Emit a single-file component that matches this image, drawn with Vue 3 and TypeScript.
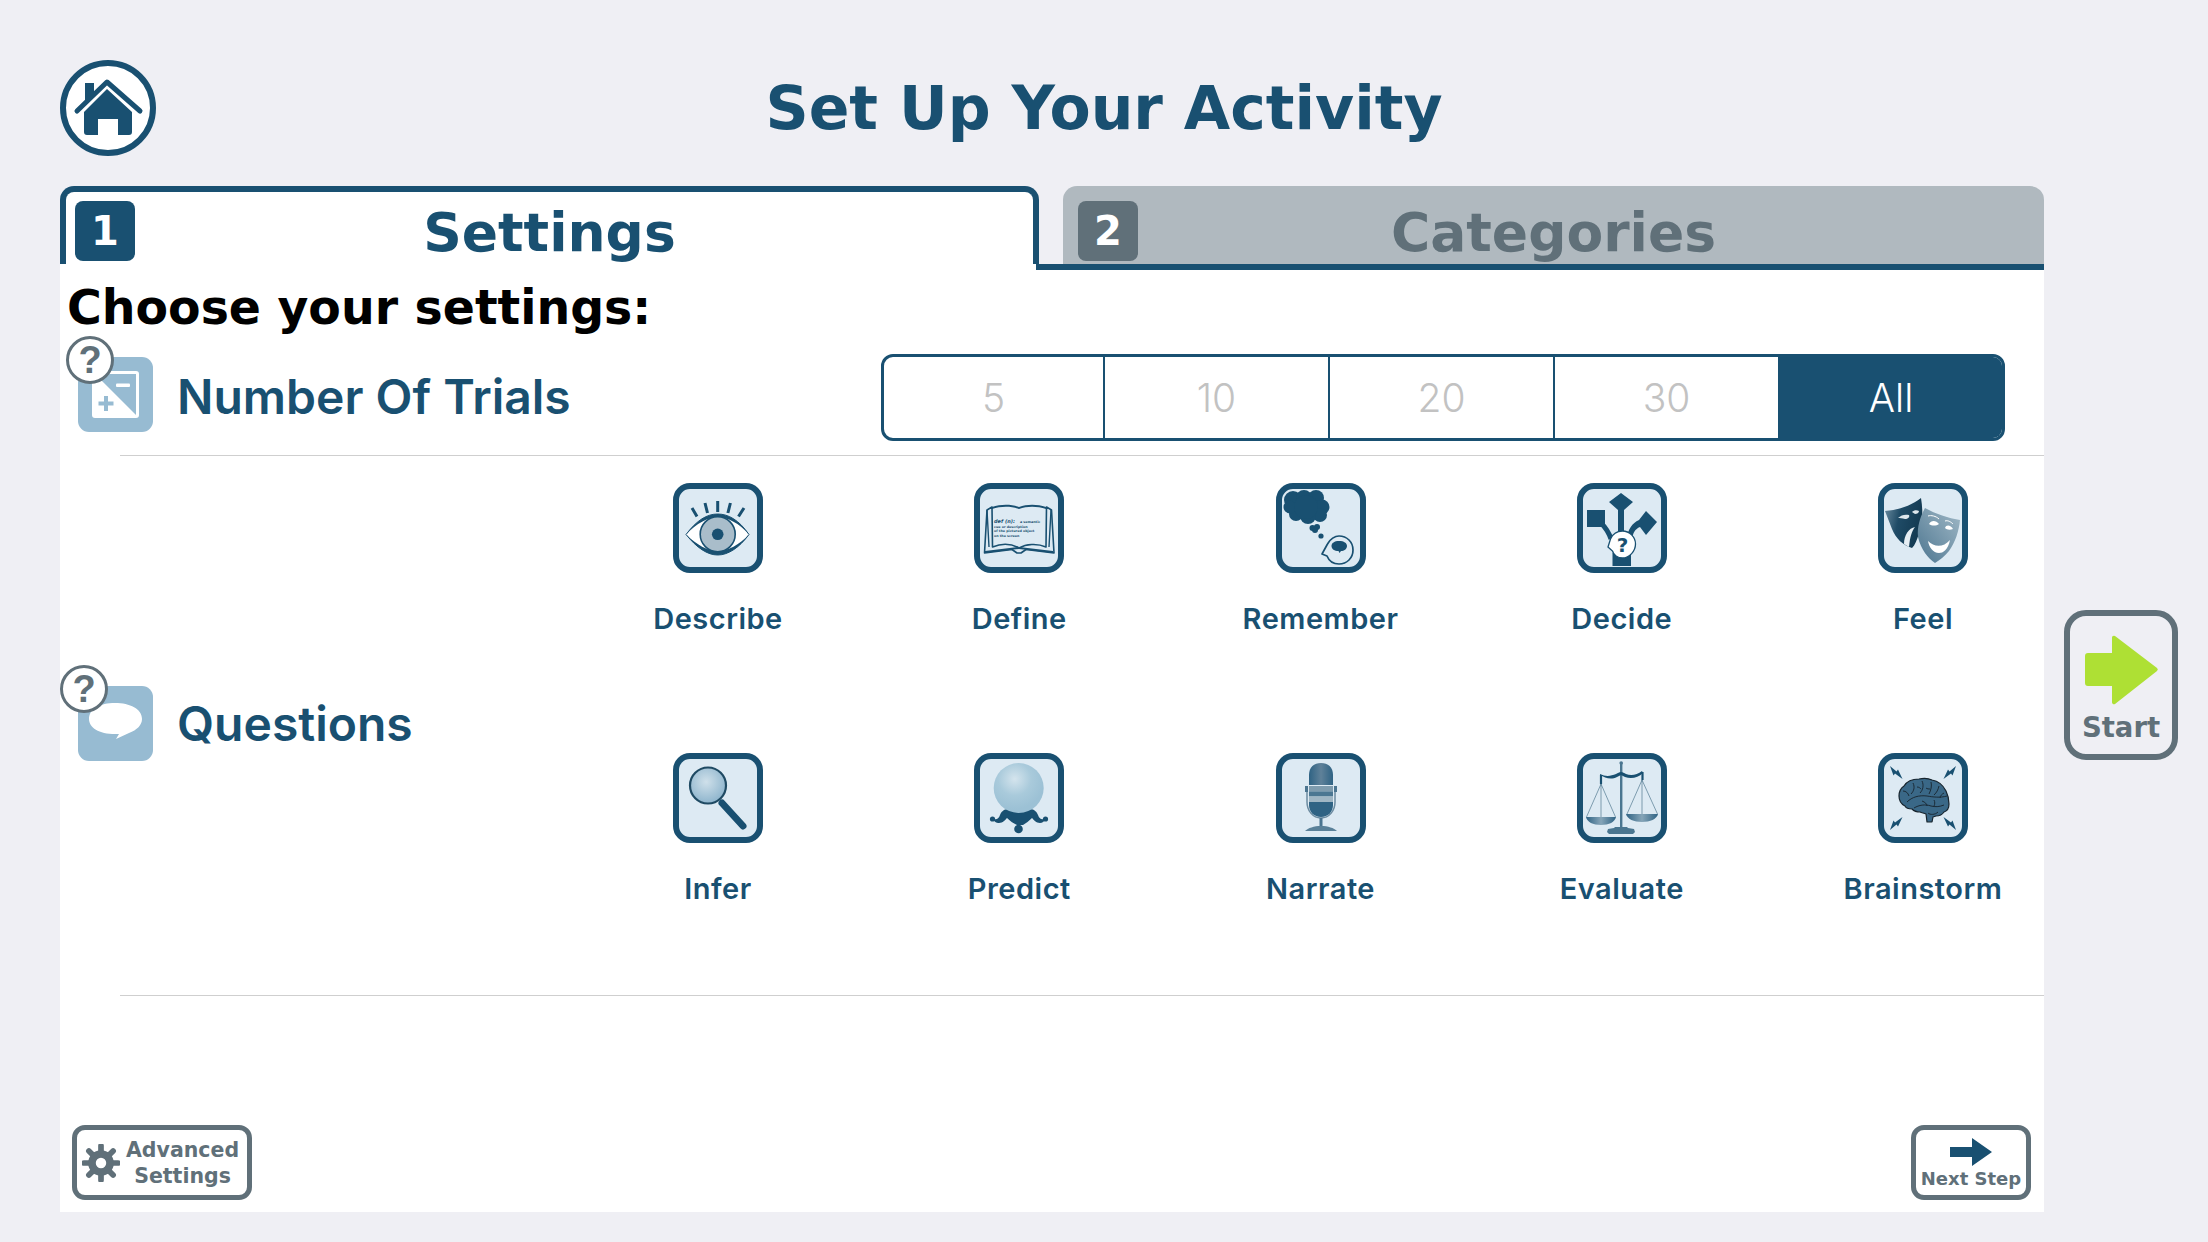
<script setup lang="ts">
const trialOptions = ['5', '10', '20', '30', 'All']
const selectedTrials = 'All'

const questions = [
  { id: 'describe', label: 'Describe' },
  { id: 'define', label: 'Define' },
  { id: 'remember', label: 'Remember' },
  { id: 'decide', label: 'Decide' },
  { id: 'feel', label: 'Feel' },
  { id: 'infer', label: 'Infer' },
  { id: 'predict', label: 'Predict' },
  { id: 'narrate', label: 'Narrate' },
  { id: 'evaluate', label: 'Evaluate' },
  { id: 'brainstorm', label: 'Brainstorm' }
]

const gearTeeth = [0, 45, 90, 135]
const boltCorners = [
  'translate(0 0)',
  'translate(90 0) scale(-1 1)',
  'translate(0 90) scale(1 -1)',
  'translate(90 90) scale(-1 -1)'
]
</script>

<template>
  <div class="page">
    <header class="header">
      <div class="home">
        <svg viewBox="0 0 96 96" width="96" height="96">
          <circle cx="48" cy="48" r="45" fill="#fff" stroke="#195071" stroke-width="6" />
          <path d="M25 23h9v11l-9 10z" fill="#195071" />
          <path d="M17 51 47 22 80 51" fill="none" stroke="#195071" stroke-width="5" stroke-linecap="round" stroke-linejoin="round" />
          <path d="M47 29 72 52v20a3 3 0 0 1-3 3H58V59H38v16H27a3 3 0 0 1-3-3V52z" fill="#195071" />
        </svg>
      </div>
      <h1 class="title">Set Up Your Activity</h1>
    </header>

    <main class="main">
      <section class="panel">
        <div class="tabs">
          <div class="tab tab-active">
            <span class="badge">1</span>
            <span class="tab-name">Settings</span>
          </div>
          <div class="tab-rest">
            <div class="tab tab-idle">
              <span class="badge">2</span>
              <span class="tab-name">Categories</span>
            </div>
          </div>
        </div>

        <div class="body">
          <h2 class="choose">Choose your settings:</h2>

          <div class="row trials">
            <div class="row-icon trials-icon">
              <svg viewBox="0 0 75 75" width="75" height="75">
                <rect width="75" height="75" rx="11" fill="#97bbd2" />
                <rect x="14" y="14" width="47" height="47" rx="3" fill="#fff" />
                <path d="M17 17h41v41z" fill="#97bbd2" />
                <rect x="38" y="26.5" width="14" height="3.5" rx="1" fill="#fff" />
                <path d="M26 39h4v5.5h5.5v4H30V54h-4v-5.5h-5.5v-4H26z" fill="#97bbd2" />
              </svg>
              <span class="help">?</span>
            </div>
            <span class="row-label">Number Of Trials</span>
            <div class="segments">
              <span
                v-for="option in trialOptions"
                :key="option"
                class="segment"
                :class="{ selected: option === selectedTrials }"
              >{{ option }}</span>
            </div>
          </div>

          <div class="row questions">
            <div class="row-icon questions-icon">
              <svg viewBox="0 0 75 75" width="75" height="75">
                <rect width="75" height="75" rx="11" fill="#97bbd2" />
                <path d="M37 17c15 0 27 6 27 16 0 6-5 11-13 14l-13 6 3-5C22 49 11 42 11 33c0-10 11-16 26-16z" fill="#fff" />
              </svg>
              <span class="help help-shifted">?</span>
            </div>
            <span class="row-label">Questions</span>
            <div class="question-grid">
              <div v-for="q in questions" :key="q.id" class="question">
                <svg class="tile" viewBox="0 0 90 90" width="90" height="90">
                  <rect x="3" y="3" width="84" height="84" rx="14" fill="#ddeaf3" stroke="#195071" stroke-width="6" />

                  <g v-if="q.id === 'describe'">
                    <path d="M13 51.5C24 37 34 31 44.7 31S66 37 76 51.5C66 65 55 72 44.7 72S24 65 13 51.5z" fill="#fff" stroke="#195071" stroke-width="1" />
                    <path d="M13 51.5C24 37 34 31 44.7 31S66 37 76 51.5C66 40 55 34.5 44.7 34.5S24 40 13 51.5zM13 51.5C24 65 34 72 44.7 72S66 65 76 51.5C66 62 55 68 44.7 68S24 62 13 51.5z" fill="#195071" />
                    <circle cx="44.7" cy="51.3" r="17.5" fill="#a9bdca" stroke="#195071" stroke-width="1.6" />
                    <circle cx="44.7" cy="51.3" r="5.8" fill="#195071" />
                    <path d="M19 25l5 8.5M32 20l2.5 10M44.7 18v11M57.4 20l-2.5 10M71 25l-5.5 8.5" stroke="#195071" stroke-width="3" fill="none" />
                  </g>

                  <g v-else-if="q.id === 'define'">
                    <path d="M10.5 70 13 27l5-3 .5 40C28 60 38 61 45 65c7-4 18-5 27-1l.5-40 5 3L80 70 52 66.5 47 70h-4l-5-3.500z" fill="#ddeaf3" stroke="#195071" stroke-width="1.6" stroke-linejoin="round" />
                    <path d="M18 24c9-3 19-3 27 0 8-3 18-3 27 0v2c-9-3-19-3-27 0-8-3-18-3-27 0z" fill="#195071" />
                    <path d="M11 70l34-4 34 4v-2l-34-4-34 4z" fill="#195071" />
                    <path d="M13 27l2 37M77 27l-2 37" stroke="#195071" stroke-width="1.4" />
                    <text x="20" y="40" class="book-text book-def">def (n):</text>
                    <text x="46" y="40" class="book-text">a semantic</text>
                    <text x="20" y="44.500" class="book-text">cue or description</text>
                    <text x="20" y="49" class="book-text">of the pictured object</text>
                    <text x="20" y="53.500" class="book-text">on the screen</text>
                  </g>

                  <g v-else-if="q.id === 'remember'" fill="#195071">
                    <circle cx="17" cy="17" r="9" />
                    <circle cx="28" cy="15" r="8" />
                    <circle cx="40" cy="15" r="8" />
                    <circle cx="46" cy="24" r="7.500" />
                    <circle cx="44" cy="32" r="7" />
                    <circle cx="32" cy="33" r="8" />
                    <circle cx="20" cy="31" r="7" />
                    <circle cx="14" cy="24" r="6.500" />
                    <circle cx="30" cy="24" r="12" />
                    <circle cx="36.500" cy="45" r="3" />
                    <circle cx="41" cy="44" r="3" />
                    <circle cx="39" cy="47" r="3" />
                    <circle cx="45" cy="53" r="2.600" />
                    <path d="M46 71l5.500-10C54 56 59 53 63 53c8 0 14 6 14 14s-6 14-14 14c-6 0-10-3-12-8z" fill="#ddeaf3" stroke="#195071" stroke-width="1.700" stroke-linejoin="round" />
                    <path d="M63 58c5 0 8 2 8 5s-3 5-6 5l-1.500 2-1-2c-4 0-7-2-7-5s3-5 7.500-5z" />
                  </g>

                  <g v-else-if="q.id === 'decide'" fill="#195071">
                    <path d="M44 10 56 19l-9 8v28h-6V27l-9-8z" />
                    <rect x="10" y="27" width="18" height="17" />
                    <path d="M24 40c5 5 8 10 10 16" fill="none" stroke="#195071" stroke-width="5" />
                    <path d="M69 28 80 39 69 52 63 44C58 46 56 50 55 56L50 54C51 47 55 40 62 37z" />
                    <rect x="35.500" y="70" width="18.500" height="13" />
                    <path d="M31 64l2.500-8c2-5 7-8 12-8 7 0 13 6 13 13s-6 14-13 14c-5 0-9-3-10-7z" fill="#fff" stroke="#195071" stroke-width="1.300" />
                    <text x="45.500" y="69" class="tile-q">?</text>
                  </g>

                  <g v-else-if="q.id === 'feel'">
                    <path d="M7 28C20 27 33 23 43 15c2 12 2 24-2 35-2 7-4 12-7 15-9-3-16-9-20-19z" fill="url(#maskDark)" />
                    <path d="M20 35c3-3 7-4 11-3 1 2-1 4-4 4-3-1-5-1-7-1zM34 29c2-2 5-2 7-1 0 2-2 3-4 3z" fill="#dce6ec" />
                    <path d="M26 61c0-9 5-16 11-17-3 4-5 9-6 20z" fill="#e6eef3" />
                    <path d="M47 25c11 6 23 10 35 12-1 11-5 23-11 31-4 5-9 9-14 12-7-5-14-13-17-26-1-10 2-20 7-29z" fill="url(#maskLight)" />
                    <path d="M51 41c2-4 7-4 10 0-3 2-7 2-10 0zM67 45c1-4 6-3 8 1-3 1-6 1-8-1z" fill="#fff" />
                    <path d="M50 58c6 6 15 7 22-1-2 10-7 13-11 13-6 0-10-6-11-12z" fill="#fff" />
                    <path d="M50 33c3-1 8 0 11 3M67 38c3-1 6 1 8 3" fill="none" stroke="#fff" stroke-width="1" />
                  </g>

                  <g v-else-if="q.id === 'infer'">
                    <path d="M49 50 70 73" stroke="#195071" stroke-width="7" stroke-linecap="round" />
                    <circle cx="35" cy="32.500" r="18" fill="url(#lens)" stroke="#1f4a63" stroke-width="2.200" />
                  </g>

                  <g v-else-if="q.id === 'predict'" fill="#195071">
                    <path d="M20 66c3 1 5-1 6-4s4-6 8-6c6 4 16 4 22 0 4 0 7 3 8 6s3 5 6 4c1 2-1 4-4 4-4 0-6-3-8-5-3 3-6 5-9 7h-6c-4-2-7-4-10-7-2 2-4 5-8 5-3 0-6-2-5-4z" />
                    <circle cx="18.500" cy="66" r="2.600" />
                    <circle cx="71.500" cy="66" r="2.600" />
                    <circle cx="44.500" cy="76" r="4.300" />
                    <circle cx="44.700" cy="35" r="25" fill="url(#ball)" />
                  </g>

                  <g v-else-if="q.id === 'narrate'">
                    <path d="M31 34v15c0 9 6 16 14 16s14-7 14-16V34" fill="none" stroke="#6b8ba0" stroke-width="1.500" />
                    <path d="M33 22c0-8 5-12 12-12s12 4 12 12v10H33z" fill="url(#micTop)" />
                    <path d="M33 49h24v3c0 7-5 12-12 12s-12-5-12-12z" fill="#2f6384" />
                    <rect x="33" y="33" width="24" height="5.500" fill="#7f9cae" />
                    <rect x="33" y="38.500" width="24" height="5" fill="#195071" opacity=".75" />
                    <rect x="33" y="43.500" width="24" height="5.500" fill="#9fb6c4" />
                    <rect x="29" y="33" width="3" height="6" fill="#4b7590" />
                    <rect x="58" y="33" width="3" height="6" fill="#4b7590" />
                    <rect x="43.500" y="65" width="3" height="9" fill="#4b7590" />
                    <path d="M29 78c3-3 9-5 16-5s13 2 16 5z" fill="#5a8199" />
                  </g>

                  <g v-else-if="q.id === 'evaluate'">
                    <rect x="43" y="10" width="2.400" height="64" fill="#4a7690" />
                    <circle cx="44.200" cy="10" r="1.800" fill="#4a7690" />
                    <path d="M23 21c6 3 11 2 16 0 2-1 3-2 5-2s3 1 5 2c5 2 11 1 16-3l1 2c-5 5-12 6-18 4l-4-2-4 2c-6 3-12 1-17-2z" fill="#195071" />
                    <path d="M24 22v9M65.500 19v8" stroke="#195071" stroke-width="2.200" />
                    <path d="M24 31 9.500 64M24 31l14.500 33M24 31v33M65 27 50 61M65 27l15.500 34M65 27v34" stroke="#3b6780" stroke-width=".6" fill="none" />
                    <path d="M9 64h30c-1 5-7 8-15 8S10 69 9 64z" fill="url(#pan)" />
                    <path d="M49 61h32c-1 5-8 8-16 8s-15-3-16-8z" fill="url(#pan)" />
                    <path d="M38 74h12l1 1 6 1 1 3-2 2H32l-2-2 1-3 6-1z" fill="#4a7690" />
                  </g>

                  <g v-else-if="q.id === 'brainstorm'">
                    <path d="M21 43c0-4 2-8 5-10 3-5 9-7 15-7 4-1 9-1 13 1 6 1 11 5 14 11 2 4 3 9 3 13 0 4-2 7-5 8-2 3-5 4-8 4l-3 1-1 5h-5l-1-8c-2-1-4-1-6-2-3 0-6-1-8-3-3 0-6-1-7-3-4-2-6-6-6-10z" fill="#3a6887" stroke="#17242d" stroke-width="1.200" stroke-linejoin="round" />
                    <path d="M29 49c5-5 12-7 20-6 6 1 13 2 20 0M36 55c5-3 11-4 17-2 4 1 8 1 13-1M35 30c2 4 1 8-2 11M44 28c2 4 1 9-2 12M53 29c1 4 0 8-2 12M61 33c-1 4-2 6-5 9M66 40c-2 1-4 3-4 5M25 38c3 0 5 2 6 5M44 48c3 1 5 3 5 5M56 47c1 2 1 4 0 6M50 60c2 2 7 2 10-1M39 34c2 0 3 1 4 2M48 35c1 1 3 1 4 1" fill="none" stroke="#17242d" stroke-width=".9" />
                    <path
                      v-for="corner in boltCorners"
                      :key="corner"
                      d="M12 13 18.500 18.500 20 16.500 24.500 26 17 20.500 15.500 22.500z"
                      fill="#195071"
                      :transform="corner"
                    />
                  </g>

                  <defs>
                    <linearGradient id="maskDark" x1="0" y1="0" x2="1" y2=".3">
                      <stop offset="0" stop-color="#6f8fa3" />
                      <stop offset=".45" stop-color="#1f4b66" />
                      <stop offset="1" stop-color="#133a52" />
                    </linearGradient>
                    <linearGradient id="maskLight" x1="0" y1="1" x2="1" y2="0">
                      <stop offset="0" stop-color="#4d7690" />
                      <stop offset="1" stop-color="#a1b9c7" />
                    </linearGradient>
                    <radialGradient id="lens" cx=".45" cy=".4" r=".55">
                      <stop offset="0" stop-color="#cfe0ea" />
                      <stop offset="1" stop-color="#93b8cf" />
                    </radialGradient>
                    <radialGradient id="ball" cx=".42" cy=".32" r=".6">
                      <stop offset="0" stop-color="#d4e4ed" />
                      <stop offset=".55" stop-color="#a9cadb" />
                      <stop offset="1" stop-color="#9cc1d5" />
                    </radialGradient>
                    <linearGradient id="micTop" x1="0" y1="0" x2="1" y2="0">
                      <stop offset="0" stop-color="#2f6384" />
                      <stop offset=".5" stop-color="#5f8199" />
                      <stop offset="1" stop-color="#2f6384" />
                    </linearGradient>
                    <linearGradient id="pan" x1="0" y1="0" x2="1" y2="0">
                      <stop offset="0" stop-color="#2f6384" />
                      <stop offset=".5" stop-color="#86a5b8" />
                      <stop offset="1" stop-color="#2f6384" />
                    </linearGradient>
                  </defs>
                </svg>
                <span class="question-label">{{ q.label }}</span>
              </div>
            </div>
          </div>

          <footer class="footer">
            <button class="small-btn advanced">
              <svg viewBox="0 0 40 40" width="38" height="38">
                <g transform="translate(20 20)">
                  <line
                    v-for="angle in gearTeeth"
                    :key="angle"
                    x1="-18"
                    x2="18"
                    y1="0"
                    y2="0"
                    stroke="#607079"
                    stroke-width="6"
                    stroke-linecap="round"
                    :transform="`rotate(${angle})`"
                  />
                  <circle r="9.500" fill="#fff" stroke="#607079" stroke-width="8" />
                </g>
              </svg>
              <span class="advanced-text">Advanced<br />Settings</span>
            </button>
            <button class="small-btn next">
              <svg viewBox="0 0 42 28" width="42" height="28">
                <path d="M0 9h22V0l20 14-20 14v-9H0z" fill="#195071" />
              </svg>
              <span>Next Step</span>
            </button>
          </footer>
        </div>
      </section>

      <aside class="side">
        <button class="start">
          <svg viewBox="0 0 74 70" width="74" height="70">
            <path d="M3 18h24V3a2 2 0 0 1 3-2l42 32a2 2 0 0 1 0 3L30 69a2 2 0 0 1-3-2V51H3a3 3 0 0 1-3-3V21a3 3 0 0 1 3-3z" fill="#aee034" />
          </svg>
          <span>Start</span>
        </button>
      </aside>
    </main>
  </div>
</template>

<style>
html,
body {
  margin: 0;
  background: #efeff4;
}
</style>

<style scoped>
.page {
  width: 2208px;
  height: 1242px;
  box-sizing: border-box;
  padding: 60px 0 30px 60px;
  background: #efeff4;
  overflow: hidden;
  font-family: "DejaVu Sans", sans-serif;
  color: #195071;
}

.header {
  display: flex;
  align-items: center;
  height: 96px;
  margin-bottom: 30px;
  position: relative;
}

.home {
  width: 96px;
  height: 96px;
  position: absolute;
  left: 0;
  top: 0;
}

.title {
  margin: 0 60px 0 0;
  flex: 1;
  text-align: center;
  font-size: 60px;
  line-height: 96px;
  font-weight: 700;
}

.main {
  display: flex;
}

.panel {
  width: 1984px;
  height: 1026px;
  display: flex;
  flex-direction: column;
}

.tabs {
  display: flex;
  height: 78px;
  flex: none;
}

.tab {
  box-sizing: border-box;
  height: 78px;
  display: grid;
  grid-template-columns: 60px 1fr 60px;
  align-items: start;
  padding: 9px 9px 0;
  border-radius: 14px 14px 0 0;
}

.tab-active {
  width: 979px;
  background: #fff;
  border: 6px solid #195071;
  border-bottom: none;
  position: relative;
  z-index: 1;
}

.tab-rest {
  flex: 1;
  height: 84px;
  box-sizing: border-box;
  margin-left: -3px;
  padding-left: 27px;
  border-bottom: 6px solid #195071;
  position: relative;
}

.tab-idle {
  background: #b0b9bf;
  padding: 15px 15px 0;
  color: #607079;
}

.badge {
  width: 60px;
  height: 60px;
  border-radius: 8px;
  background: #195071;
  color: #fff;
  font-size: 40px;
  font-weight: 700;
  line-height: 60px;
  text-align: center;
}

.tab-idle .badge {
  background: #607079;
}

.tab-name {
  text-align: center;
  font-size: 53.5px;
  line-height: 63px;
  font-weight: 700;
}

.body {
  flex: 1;
  background: #fff;
  display: flex;
  flex-direction: column;
  min-height: 0;
}

.choose {
  margin: 0;
  height: 72px;
  box-sizing: border-box;
  padding: 15px 0 0 7px;
  font-size: 47.4px;
  line-height: 58px;
  font-weight: 700;
  color: #000;
  white-space: nowrap;
}

.row {
  display: flex;
  align-items: center;
  position: relative;
  padding-left: 18px;
}

.row::after {
  content: "";
  position: absolute;
  left: 60px;
  right: 0;
  bottom: 0;
  height: 1px;
  background: #cfcfcf;
}

.trials {
  height: 120px;
  box-sizing: border-box;
  padding-top: 18px;
  padding-right: 39px;
  padding-bottom: 15px;
}

.questions {
  height: 540px;
  box-sizing: border-box;
  padding-right: 14px;
}

.row-icon {
  position: relative;
  width: 75px;
  height: 75px;
  flex: none;
}

.row-icon svg {
  display: block;
}

.trials-icon {
  margin-bottom: 6px;
}

.questions-icon {
  margin-bottom: 5px;
}

.help {
  position: absolute;
  left: -12px;
  top: -21px;
  width: 48px;
  height: 48px;
  box-sizing: border-box;
  border: 3px solid #607079;
  border-radius: 50%;
  background: #fff;
  color: #607079;
  font-family: "Liberation Sans", sans-serif;
  font-size: 38px;
  font-weight: 700;
  line-height: 42px;
  text-align: center;
}

.help-shifted {
  left: -18px;
}

.row-label {
  margin-left: 24px;
  font-family: Inter, sans-serif;
  font-size: 48px;
  font-weight: 600;
  white-space: nowrap;
}

.trials .row-label {
  margin-bottom: 2px;
}

.questions .row-label {
  margin-bottom: 6px;
}

.segments {
  margin-left: auto;
  width: 1124px;
  height: 87px;
  box-sizing: border-box;
  display: flex;
  border: 3px solid #195071;
  border-radius: 12px;
  overflow: hidden;
}

.segment {
  flex: 0 0 225px;
  box-sizing: border-box;
  display: flex;
  align-items: center;
  justify-content: center;
  border-right: 2px solid #195071;
  font-family: Inter, sans-serif;
  font-size: 39px;
  font-weight: 300;
  color: #c2c2c2;
}

.segment:first-child {
  flex-basis: 221px;
}

.segment:last-child {
  flex: 1;
  border-right: none;
}

.segment.selected {
  background: #195071;
  color: #fff;
}

.question-grid {
  margin-left: auto;
  align-self: flex-start;
  padding-top: 27px;
  display: grid;
  grid-template-columns: repeat(5, 214px);
  grid-auto-rows: 270px;
  column-gap: 87.25px;
}

.question {
  display: flex;
  flex-direction: column;
  align-items: center;
}

.tile {
  display: block;
}

.question-label {
  margin-top: 29px;
  font-family: Inter, sans-serif;
  font-size: 29px;
  line-height: 34px;
  font-weight: 600;
  letter-spacing: 0.5px;
  white-space: nowrap;
}

.book-text {
  font-family: "DejaVu Sans", sans-serif;
  font-size: 3.3px;
  font-weight: 700;
  fill: #195071;
}

.book-def {
  font-size: 5px;
  font-style: italic;
}

.tile-q {
  font-family: "DejaVu Sans", sans-serif;
  font-size: 20px;
  font-weight: 700;
  fill: #195071;
  text-anchor: middle;
}

.footer {
  flex: 1;
  display: flex;
  justify-content: space-between;
  align-items: flex-end;
  padding: 0 13px 12px 12px;
}

.small-btn {
  box-sizing: border-box;
  border: 5px solid #607079;
  border-radius: 13px;
  background: #fff;
  color: #607079;
  font-family: "DejaVu Sans", sans-serif;
  font-weight: 700;
  padding: 0;
}

.advanced {
  width: 180px;
  height: 75px;
  display: flex;
  align-items: center;
  padding-left: 5px;
  gap: 6px;
  font-size: 20.5px;
  line-height: 26px;
}

.advanced svg {
  flex: none;
}

.advanced-text {
  text-align: center;
}

.next {
  width: 120px;
  height: 75px;
  display: flex;
  flex-direction: column;
  align-items: center;
  font-size: 18px;
  line-height: 22px;
  padding-top: 8px;
}

.next svg {
  display: block;
  margin-bottom: 2px;
}

.side {
  padding: 424px 0 0 20px;
}

.start {
  box-sizing: border-box;
  width: 114px;
  height: 150px;
  border: 6px solid #607079;
  border-radius: 22px;
  background: #efeff4;
  color: #607079;
  font-family: "DejaVu Sans", sans-serif;
  font-size: 27.5px;
  font-weight: 700;
  display: flex;
  flex-direction: column;
  align-items: center;
  padding: 19px 0 0;
}

.start svg {
  display: block;
  margin: 0 0 6px 2px;
}
</style>
